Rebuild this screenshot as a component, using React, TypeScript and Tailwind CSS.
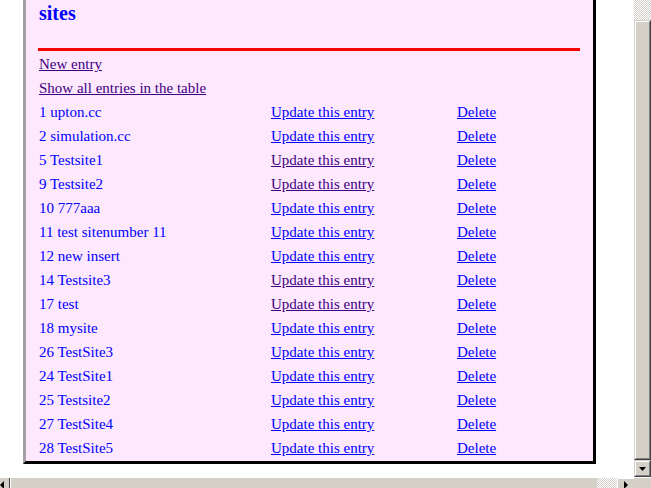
import React from "react";

const rows: { label: string; visited: boolean }[] = [
  { label: "1 upton.cc", visited: false },
  { label: "2 simulation.cc", visited: false },
  { label: "5 Testsite1", visited: true },
  { label: "9 Testsite2", visited: true },
  { label: "10 777aaa", visited: false },
  { label: "11 test sitenumber 11", visited: false },
  { label: "12 new insert", visited: false },
  { label: "14 Testsite3", visited: true },
  { label: "17 test", visited: true },
  { label: "18 mysite", visited: false },
  { label: "26 TestSite3", visited: false },
  { label: "24 TestSite1", visited: false },
  { label: "25 Testsite2", visited: false },
  { label: "27 TestSite4", visited: false },
  { label: "28 TestSite5", visited: false },
];

const checker =
  "bg-[repeating-conic-gradient(#d4d0c8_0_25%,#ffffff_0_50%)] bg-[length:2px_2px]";

export default function App() {
  return (
    <div
      className="w-[651px] h-[488px] overflow-hidden flex flex-col bg-white text-[15px] leading-[24px]"
      style={{ fontFamily: '"Liberation Serif", "Times New Roman", serif' }}
    >
      <div className="flex h-[477px]">
        <div className="w-[634px] h-full overflow-hidden bg-white">
          <div className="ml-[23px] w-[573px] bg-[#fde8fd] border-l-[3px] border-l-[#a69ea6] border-r-[3px] border-r-black border-b-[3px] border-b-black pl-[12px] pr-[13px] pt-[1px] pb-[1px]">
            <h2 className="pl-[1px] text-[20px] leading-[24px] font-bold text-[#0000ff]">
              sites
            </h2>
            <div className="mt-[23px] h-[3px] bg-[#ff0000]" />
            <div className="mt-[1px] pl-[1px]">
              <div>
                <a href="#" className="text-[#400080] underline">
                  New entry
                </a>
              </div>
              <div>
                <a href="#" className="text-[#400080] underline">
                  Show all entries in the table
                </a>
              </div>
              {rows.map((r) => (
                <div key={r.label} className="grid grid-cols-[232px_186px_1fr]">
                  <span className="text-[#0000ff] whitespace-nowrap">{r.label}</span>
                  <span>
                    <a
                      href="#"
                      className={
                        r.visited
                          ? "text-[#400080] underline whitespace-nowrap"
                          : "text-[#0000ff] underline whitespace-nowrap"
                      }
                    >
                      Update this entry
                    </a>
                  </span>
                  <span>
                    <a href="#" className="text-[#0000ff] underline">
                      Delete
                    </a>
                  </span>
                </div>
              ))}
            </div>
          </div>
        </div>
        {/* vertical scrollbar */}
        <div className="w-[17px] h-full flex flex-col bg-[#d4d0c8]">
          <div className={`h-[20px] ${checker}`} />
          <div className="flex-1 border-t border-l border-t-[#d4d0c8] border-l-[#d4d0c8] border-r border-b border-r-[#404040] border-b-[#404040]">
            <div className="h-full border-t border-l border-t-white border-l-white border-r border-b border-r-[#808080] border-b-[#808080]" />
          </div>
          <div className="h-[17px] border-t border-l border-t-[#d4d0c8] border-l-[#d4d0c8] border-r border-b border-r-[#404040] border-b-[#404040]">
            <div className="h-full flex items-center justify-center border-t border-l border-t-white border-l-white border-r border-b border-r-[#808080] border-b-[#808080]">
              <svg width="7" height="4" viewBox="0 0 7 4">
                <path d="M0 0h7L3.5 4z" fill="#000" />
              </svg>
            </div>
          </div>
        </div>
      </div>
      {/* horizontal scrollbar */}
      <div className="h-[11px] flex bg-[#d4d0c8] border-t border-t-white overflow-hidden">
        <div className="w-[10px] h-[17px] flex items-start border-r border-r-[#404040]">
          <svg width="4" height="8" viewBox="0 0 4 8" className="mt-[3px]">
            <path d="M4 0v8L0 4z" fill="#000" />
          </svg>
        </div>
        <div className="w-[587px] h-[17px] border-l border-l-white" />
        <div className={`w-[20px] h-[17px] ${checker}`} />
        <div className="w-[17px] h-[17px] border-l border-t border-l-white border-t-white flex justify-center">
          <svg width="4" height="8" viewBox="0 0 4 8" className="mt-[2px]">
            <path d="M0 0v8L4 4z" fill="#000" />
          </svg>
        </div>
        <div className="w-[17px] h-[17px] bg-[#d4d0c8]" />
      </div>
    </div>
  );
}
